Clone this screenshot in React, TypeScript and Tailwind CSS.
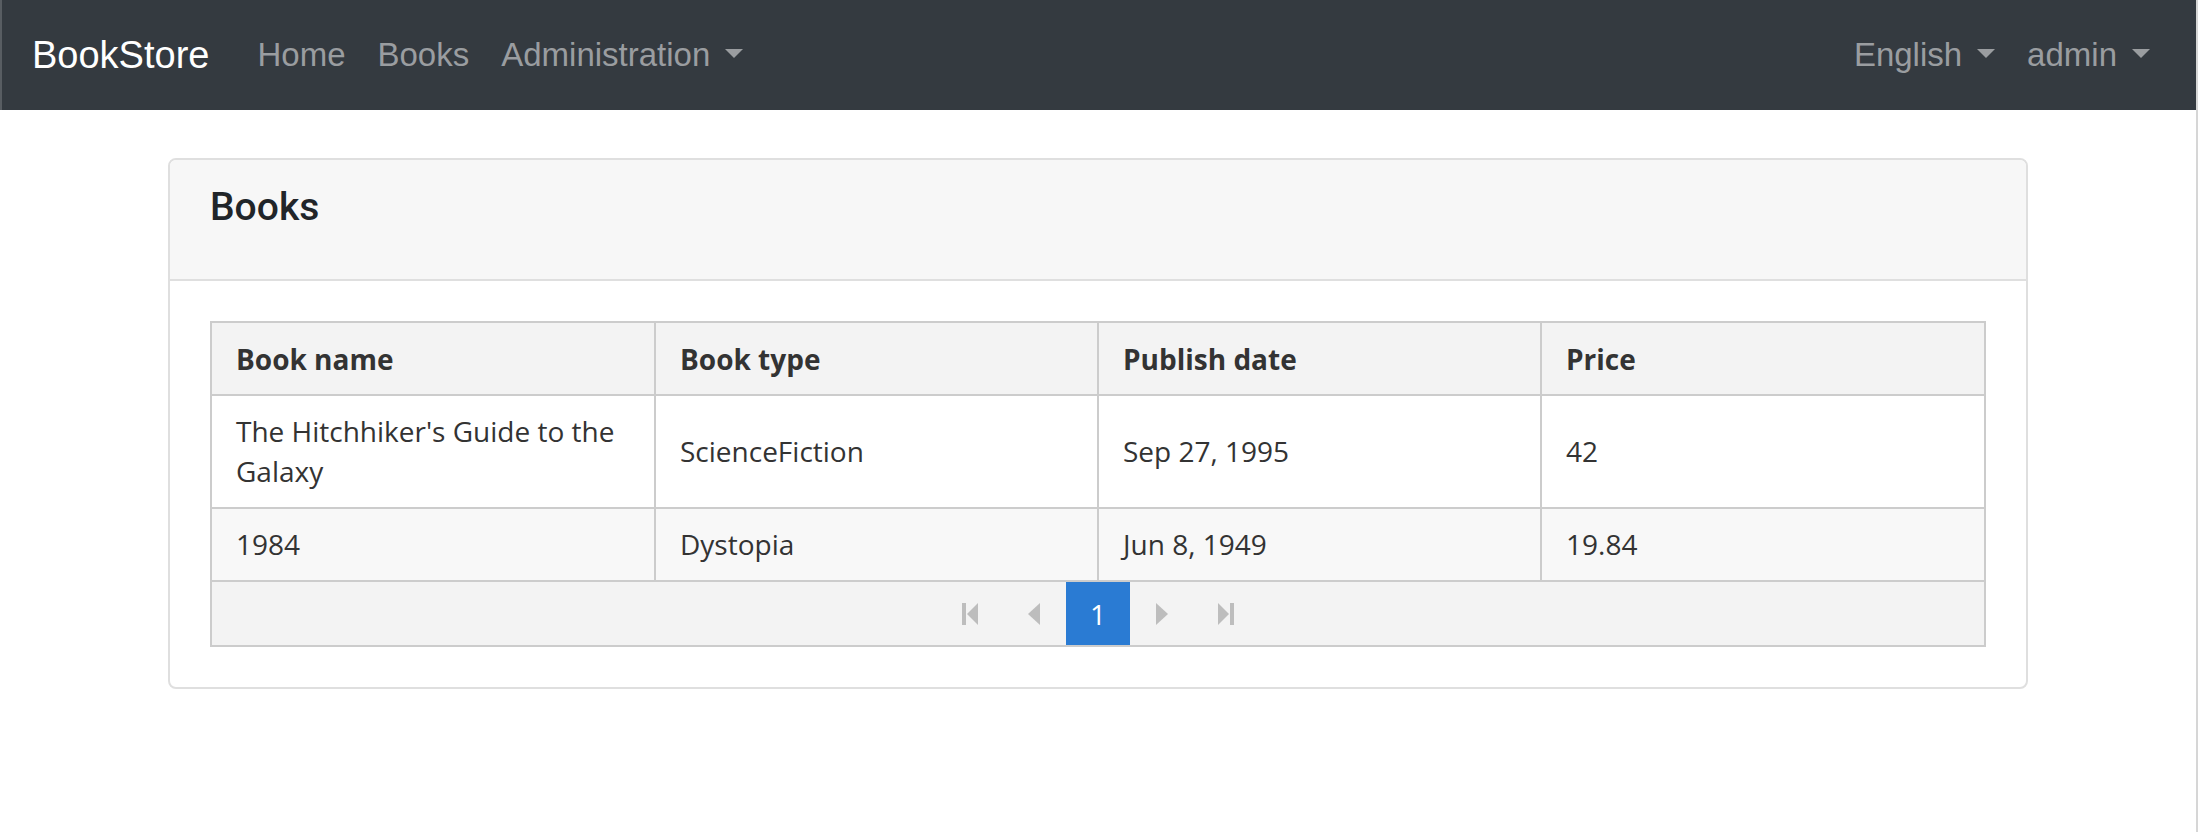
import React from "react";

const sans = "font-['Liberation_Sans',Arial,sans-serif]";
const grid = "font-['Open_Sans',sans-serif]";

const Caret = () => (
  <span className="ml-[15px] mt-[-4px] inline-block h-0 w-0 border-x-[9px] border-t-[9px] border-b-0 border-x-transparent border-t-[#9a9da0]" />
);

const NavLink = ({ title, dropdown }: { title: string; dropdown?: boolean }) => (
  <a className="flex items-center px-[16px] text-[33px] leading-[48px] text-[#9a9da0]" href="#">
    {title}
    {dropdown && <Caret />}
  </a>
);

const books = [
  { name: "The Hitchhiker's Guide to the Galaxy", type: "ScienceFiction", date: "Sep 27, 1995", price: "42" },
  { name: "1984", type: "Dystopia", date: "Jun 8, 1949", price: "19.84" },
];

// pager glyphs
const First = () => (
  <svg width="16" height="22" viewBox="0 0 16 22" fill="#bdbdbd">
    <rect x="0" y="0" width="4" height="22" />
    <polygon points="16,0 16,22 5,11" />
  </svg>
);
const Prev = () => (
  <svg width="12" height="22" viewBox="0 0 12 22" fill="#bdbdbd">
    <polygon points="12,0 12,22 0,11" />
  </svg>
);
const Next = () => (
  <svg width="12" height="22" viewBox="0 0 12 22" fill="#bdbdbd">
    <polygon points="0,0 0,22 12,11" />
  </svg>
);
const Last = () => (
  <svg width="16" height="22" viewBox="0 0 16 22" fill="#bdbdbd">
    <polygon points="0,0 0,22 11,11" />
    <rect x="12" y="0" width="4" height="22" />
  </svg>
);

const App = () => {
  return (
    <div className={`min-h-[832px] border-r-2 border-[#d6d6d6] bg-white ${sans}`}>
      {/* top navbar */}
      <nav className="flex h-[110px] items-center justify-between border-l-2 border-[#585d62] bg-[#343a40] px-[30px]">
        <div className="flex items-center">
          <a href="#" className="mr-[32px] text-[38px] leading-[60px] text-white">
            BookStore
          </a>
          <NavLink title="Home" />
          <NavLink title="Books" />
          <NavLink title="Administration" dropdown />
        </div>
        <div className="flex items-center">
          <NavLink title="English" dropdown />
          <NavLink title="admin" dropdown />
        </div>
      </nav>

      <div className="mx-auto max-w-[1920px] px-[30px] pt-[48px]">
        <div className="rounded-[8px] border-2 border-[#dfdfdf]">
          {/* card header */}
          <div className="h-[121px] rounded-t-[6px] border-b-2 border-[#dfdfdf] bg-[#f7f7f7] px-[40px] pt-[23px]">
            <h5 className="font-['Roboto',Arial,sans-serif] text-[39px] font-medium leading-[48px] text-[#212529]">Books</h5>
          </div>

          {/* card body */}
          <div className="p-[40px]">
            <div className={`border-2 border-[#cccccc] text-[28px] leading-[40px] text-[#333333] ${grid}`}>
              <table className="w-full table-fixed border-collapse">
                <thead>
                  <tr className="bg-[#f3f3f3]">
                    {["Book name", "Book type", "Publish date", "Price"].map((h, i) => (
                      <th
                        key={h}
                        className={`border-b-2 border-[#cccccc] px-[24px] pt-[16px] pb-[15px] text-left font-bold ${i < 3 ? "border-r-2" : ""}`}
                      >
                        {h}
                      </th>
                    ))}
                  </tr>
                </thead>
                <tbody>
                  {books.map((b, r) => (
                    <tr key={b.name} className={r % 2 ? "bg-[#f8f8f8]" : "bg-white"}>
                      {[b.name, b.type, b.date, b.price].map((v, i) => (
                        <td
                          key={i}
                          className={`border-b-2 border-[#cccccc] px-[24px] pt-[15px] pb-[16px] align-middle ${i < 3 ? "border-r-2" : ""}`}
                        >
                          {v}
                        </td>
                      ))}
                    </tr>
                  ))}
                </tbody>
              </table>

              {/* pager */}
              <div className="flex h-[63px] justify-center bg-[#f3f3f3]">
                <div className="flex w-[64px] items-center justify-center"><First /></div>
                <div className="flex w-[64px] items-center justify-center"><Prev /></div>
                <div className="flex w-[64px] items-center justify-center bg-[#2a7bd3] text-white">1</div>
                <div className="flex w-[64px] items-center justify-center"><Next /></div>
                <div className="flex w-[64px] items-center justify-center"><Last /></div>
              </div>
            </div>
          </div>
        </div>
      </div>
    </div>
  );
};

export default App;
